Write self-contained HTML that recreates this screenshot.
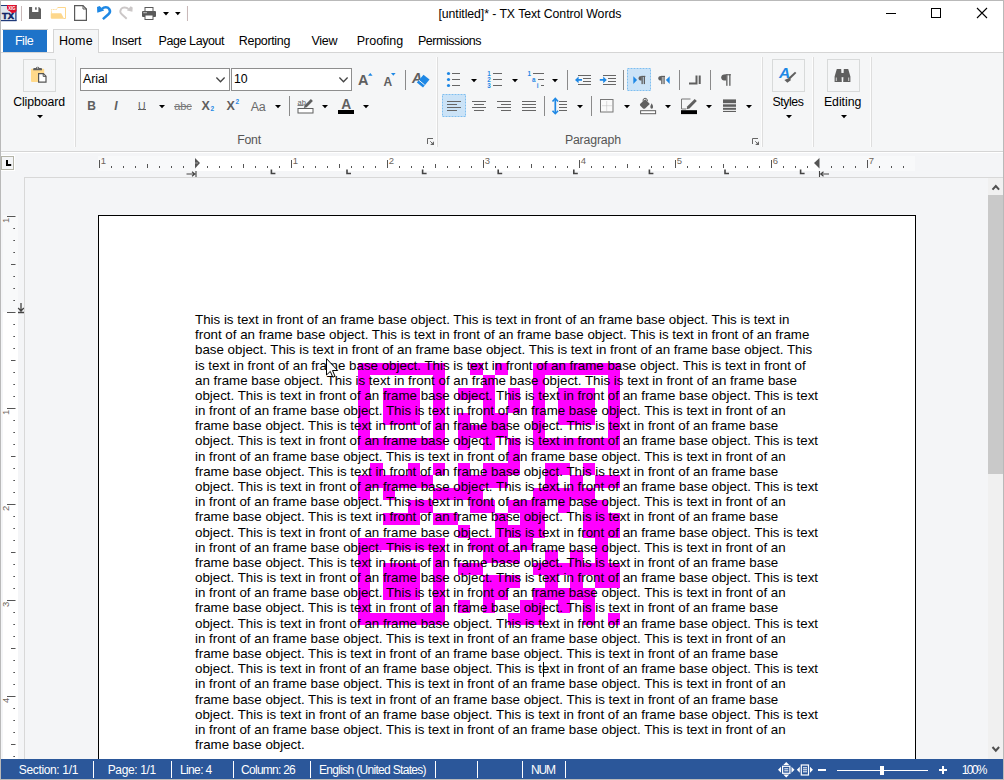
<!DOCTYPE html>
<html><head><meta charset="utf-8"><title>TX Text Control Words</title>
<style>

*{box-sizing:border-box;margin:0;padding:0}
html,body{width:1004px;height:780px;overflow:hidden;background:#fff}
body{font-family:"Liberation Sans",sans-serif;font-size:12px;color:#000}
#win{position:absolute;left:0;top:0;width:1004px;height:780px;background:#fff;border:1px solid #b9b9b9;overflow:hidden}
#win>*{position:absolute}
.abs,.abs>*{position:absolute}
svg{position:absolute;overflow:visible}
.t{position:absolute;white-space:nowrap;line-height:14px}
.c{transform:translateX(-50%)}
.vsep{position:absolute;width:1px;background:#dedede;box-shadow:-1px 0 0 #fdfdfd}
.sep2{position:absolute;width:1px;background:#8a8a8a}
.dd{position:absolute;width:0;height:0;border-left:2.7px solid transparent;border-right:2.7px solid transparent;border-top:3.3px solid #000}
.qr{position:absolute}
.ln{position:absolute;left:195px;white-space:nowrap;font-size:13.333px;line-height:15px;color:#000}

</style></head><body>
<div id="win">

<div class="abs" style="left:-1px;top:-1px;width:1004px;height:30px">
  <!-- app icon -->
  <svg style="left:1px;top:5px" width="16" height="17" viewBox="0 0 16 17">
    <rect x="0" y="0" width="15.5" height="16" fill="#dfe7ee"/>
    <rect x="0" y="0" width="15.5" height="1" fill="#1f3a7a"/>
    <rect x="0" y="15" width="15.5" height="1.2" fill="#1f3a7a"/>
    <rect x="14.3" y="0" width="1.2" height="16" fill="#1f3a7a"/>
    <text x="1" y="14" font-family="Liberation Sans" font-weight="bold" font-size="9.200" fill="#0f2466" stroke="#0f2466" stroke-width="0.500" textLength="12" lengthAdjust="spacingAndGlyphs">TX</text>
    <path d="M6 0h9.500v6q-1 2.200-4 2q-1.800-0.200-2.400-1.600q-1.800-0.200-2.500-1.600q-1-1.500-0.600-4.800z" fill="#e0102c"/>
    <text x="7.300" y="5.200" font-family="Liberation Sans" font-weight="bold" font-size="5" fill="#fff" textLength="7.200" lengthAdjust="spacingAndGlyphs">XIG</text>
  </svg>
  <div class="vsep" style="left:21px;top:6px;height:15px;background:#c9b9b9"></div>
  <!-- save -->
  <svg style="left:29px;top:7px" width="12" height="12" viewBox="0 0 12 12">
    <path d="M0 0h10l2 2v10h-12z" fill="#5f5f5f"/>
    <rect x="3.100" y="0" width="6.300" height="5" fill="#fff"/>
    <rect x="6.100" y="0.300" width="1.600" height="2.400" fill="#5f5f5f"/>
  </svg>
  <!-- open folder -->
  <svg style="left:50px;top:6px" width="17" height="14" viewBox="0 0 17 14">
    <path d="M7.500 1.500h8v11h-2" fill="none" stroke="#fdd78c" stroke-width="1"/>
    <path d="M1.500 7.300v-3.800h5l1-1.500" fill="none" stroke="#fdd78c" stroke-width="1" stroke-dasharray="1 0.700"/>
    <path d="M0.800 7.300h10.400l2.900 5.400h-12.300q-1 0-1-1z" fill="#fdd78c"/>
  </svg>
  <!-- new doc -->
  <svg style="left:74px;top:5px" width="13" height="16" viewBox="0 0 13 16">
    <path d="M0.600 0.600h8.400l3.400 3.400v11.400h-11.800z" fill="#fff" stroke="#5a5a5a" stroke-width="1.200"/>
    <path d="M9 0.600v3.400h3.400" fill="none" stroke="#5a5a5a" stroke-width="1"/>
  </svg>
  <!-- undo -->
  <svg style="left:96px;top:5px" width="16" height="16" viewBox="0 0 16 16">
    <path d="M6 3.800C8 1.900 11.600 1.700 13.200 3.900C14.800 6.200 13.800 8 12.400 9.300L6.900 14.100" fill="none" stroke="#1e88e5" stroke-width="2.500"/>
    <path d="M1 2L3.600 0.900L8.200 5.600L1.300 7.700Z" fill="#1e88e5"/>
  </svg>
  <!-- redo -->
  <svg style="left:119px;top:5px" width="16" height="16" viewBox="0 0 16 16">
    <g transform="translate(15,0) scale(-1,1)">
    <path d="M5.500 4C7.500 2.100 11.400 1.900 12.900 4C14.400 6.200 13.600 8 12.200 9.300L7.300 13.800" fill="none" stroke="#cbc7c7" stroke-width="1.900"/>
    <path d="M1.300 2.600L3.400 1.200L7 5.600L1.600 6.800Z" fill="#cbc7c7"/>
    </g>
  </svg>
  <!-- print -->
  <svg style="left:142px;top:7px" width="14" height="13" viewBox="0 0 14 13">
    <rect x="3" y="0.5" width="8" height="4" fill="#fff" stroke="#5a5a5a" stroke-width="1"/>
    <rect x="0" y="4" width="14" height="6" rx="1" fill="#5a5a5a"/>
    <rect x="3" y="8" width="8" height="4.5" fill="#fff" stroke="#5a5a5a" stroke-width="1"/>
    <rect x="1.5" y="5.2" width="1.2" height="1" fill="#fff"/><rect x="3.4" y="5.2" width="1.2" height="1" fill="#fff"/>
  </svg>
  <svg style="left:162.500px;top:11.800px" width="6" height="4"><path d="M0 0h6l-3 3.500z" fill="#000"/></svg>
  <svg style="left:175px;top:12.200px" width="6" height="4"><path d="M0 0h5.600l-2.800 3.300z" fill="#000"/></svg>
  <div class="vsep" style="left:187px;top:6px;height:15px;background:#c9b9b9"></div>
  <div class="t" style="left:438.40px;top:7px;font-size:12.3px;letter-spacing:-0.067px;color:#000;">[untitled]* - TX Text Control Words</div>
  <!-- window controls -->
  <svg style="left:886px;top:13px" width="10" height="1"><rect width="10" height="1" fill="#000"/></svg>
  <svg style="left:931px;top:8px" width="10" height="10"><rect x="0.5" y="0.5" width="9" height="9" fill="none" stroke="#000" stroke-width="1"/></svg>
  <svg style="left:977px;top:8px" width="10" height="10"><path d="M0 0L10 10M10 0L0 10" stroke="#000" stroke-width="1.1" fill="none"/></svg>
</div>


<div class="abs" style="left:-1px;top:-1px;width:1004px;height:60px">
  <div style="left:2px;top:29px;width:46px;height:1px;background:#cfcfcf"></div>
  <div style="left:3px;top:30px;width:44px;height:22px;background:#1e73c9"></div>
  <div class="t" style="left:14.90px;top:34px;font-size:12.5px;letter-spacing:-0.414px;color:#fff;">File</div>
  <div style="left:53px;top:29px;width:46px;height:24px;background:#f5f6f7;border:1px solid #d5d5d5;border-bottom:none"></div>
  <div class="t" style="left:58.90px;top:34px;font-size:12.5px;letter-spacing:0.119px;color:#000;">Home</div>
  <div class="t" style="left:111.80px;top:34px;font-size:12.5px;letter-spacing:-0.332px;color:#000;">Insert</div>
  <div class="t" style="left:158.60px;top:34px;font-size:12.5px;letter-spacing:-0.430px;color:#000;">Page Layout</div>
  <div class="t" style="left:238.80px;top:34px;font-size:12.5px;letter-spacing:-0.325px;color:#000;">Reporting</div>
  <div class="t" style="left:311.40px;top:34px;font-size:12.5px;letter-spacing:-0.256px;color:#000;">View</div>
  <div class="t" style="left:356.80px;top:34px;font-size:12.5px;letter-spacing:-0.023px;color:#000;">Proofing</div>
  <div class="t" style="left:417.90px;top:34px;font-size:12.5px;letter-spacing:-0.447px;color:#000;">Permissions</div>
</div>


<div class="abs" style="left:-1px;top:-1px;width:1004px;height:160px">
  <div style="left:1px;top:52px;width:1002px;height:100px;background:#f5f6f7;border-top:1px solid #d5d5d5;border-bottom:1px solid #d5d5d5"></div>
  <div style="left:54px;top:52px;width:44px;height:1px;background:#f5f6f7"></div>

  <!-- Clipboard -->
  <div style="left:23px;top:59px;width:33px;height:33px;border:1px solid #d8dada;background:#f5f6f7"></div>
  <svg style="left:31px;top:66px" width="17" height="18" viewBox="0 0 17 18">
    <rect x="0" y="2.800" width="13.200" height="13.200" rx="1" fill="#ffd98a"/>
    <path d="M2.200 4.300v-1.300q0-1 1-1h1.700q0.300-1.300 1.700-1.300t1.700 1.300h1.700q1 0 1 1v1.300z" fill="#5f5f5f"/>
    <circle cx="6.600" cy="1.900" r="0.600" fill="#eee"/>
    <path d="M7.600 7.600h4.800l2.600 2.600v6h-7.400z" fill="#fff" stroke="#555" stroke-width="1.200"/>
    <path d="M12.200 7.600v2.800h2.800" fill="none" stroke="#555" stroke-width="1"/>
  </svg>
  <div class="t" style="left:13.15px;top:95px;font-size:12.3px;letter-spacing:-0.087px;color:#000;">Clipboard</div>
  <svg style="left:36.6px;top:115px" width="6" height="4"><path d="M0 0h6l-3 3.300z" fill="#000"/></svg>
  <div class="vsep" style="left:75px;top:57px;height:90px"></div>

  <!-- Font combos -->
  <div style="left:80px;top:68px;width:150px;height:23px;background:#fff;border:1px solid #8e8e8e"></div>
  <div class="t" style="left:83px;top:72px;font-size:12.300px">Arial</div>
  <svg style="left:216px;top:77px" width="9" height="6"><path d="M0.400 0.500l4.100 4.200l4.100-4.200" fill="none" stroke="#444" stroke-width="1.300"/></svg>
  <div style="left:231px;top:68px;width:121px;height:23px;background:#fff;border:1px solid #8e8e8e"></div>
  <div class="t" style="left:234px;top:72px;font-size:12.300px">10</div>
  <svg style="left:338.500px;top:77px" width="9" height="6"><path d="M0.400 0.500l4.100 4.200l4.100-4.200" fill="none" stroke="#444" stroke-width="1.300"/></svg>

  <!-- grow / shrink -->
  <div class="t" style="left:358px;top:73px;font-size:14.500px;font-weight:bold;color:#5f5f5f">A</div>
  <svg style="left:367.500px;top:72.500px" width="5" height="3"><path d="M0 2.800l2.300-2.800l2.300 2.800z" fill="#1e88e5"/></svg>
  <div class="t" style="left:383.500px;top:75px;font-size:12px;font-weight:bold;color:#5f5f5f">A</div>
  <svg style="left:390.800px;top:72.500px" width="5" height="3"><path d="M0 0h4.600l-2.300 2.800z" fill="#1e88e5"/></svg>
  <div class="sep2" style="left:405px;top:70px;height:20px"></div>
  <!-- clear formatting -->
  <div class="t" style="left:412px;top:70.500px;font-size:14px;font-style:italic;font-weight:bold;color:#5f5f5f">A</div>
  <svg style="left:414px;top:74px" width="16" height="14" viewBox="0 0 16 14"><path d="M9.500 0.800l6 4.800l-6.500 8l-6.200-5z" fill="#1e88e5"/><path d="M4.800 6.200l5.800 4.700" stroke="#f5f6f7" stroke-width="1"/></svg>

  <!-- row 2 font -->
  <div class="t c" style="left:91.500px;top:99px;font-size:12px;font-weight:bold;color:#5f5f5f">B</div>
  <div class="t c" style="left:116px;top:99px;font-size:12px;font-weight:bold;font-style:italic;color:#5f5f5f">I</div>
  <div class="t c" style="left:141.700px;top:98.500px;font-size:10.500px;color:#5f5f5f">U</div><div style="left:138px;top:109.300px;width:7.500px;height:1px;background:#5f5f5f"></div>
  <svg style="left:158.5px;top:105px" width="6" height="4"><path d="M0 0h6l-3 3.300z" fill="#000"/></svg>
  <div class="t c" style="left:183px;top:99px;font-size:11px;color:#777;text-decoration:line-through">abc</div>
  <div class="t" style="left:201.500px;top:99px;font-size:12.500px;font-weight:bold;color:#5f5f5f">X</div>
  <div class="t" style="left:210.500px;top:105px;font-size:6.500px;font-weight:bold;color:#1e88e5;line-height:8px">2</div>
  <div class="t" style="left:226.500px;top:99px;font-size:12.500px;font-weight:bold;color:#5f5f5f">X</div>
  <div class="t" style="left:235.500px;top:98px;font-size:6.500px;font-weight:bold;color:#1e88e5;line-height:8px">2</div>
  <div class="t c" style="left:258px;top:100px;font-size:12.500px;color:#6a6a6a;letter-spacing:-0.500px">Aa</div>
  <svg style="left:274.5px;top:105px" width="6" height="4"><path d="M0 0h6l-3 3.300z" fill="#000"/></svg>
  <div class="sep2" style="left:289px;top:96px;height:20px"></div>
  <!-- highlight -->
  <svg style="left:297px;top:97px" width="18" height="18" viewBox="0 0 18 18">
    <text x="0.500" y="7.500" font-family="Liberation Sans" font-size="7.500" fill="#5f5f5f">ab</text>
    <path d="M0.500 8.500h6" stroke="#5f5f5f" stroke-width="0.800"/>
    <path d="M6.800 11l0.900-2.800l6.200-6.200l2 2l-6.200 6.200z" fill="#5f5f5f"/>
    <rect x="1" y="11.500" width="15" height="4.500" fill="#fff" stroke="#5f5f5f" stroke-width="1"/>
  </svg>
  <svg style="left:321.5px;top:105px" width="6" height="4"><path d="M0 0h6l-3 3.300z" fill="#000"/></svg>
  <div class="t c" style="left:346.200px;top:98.300px;font-size:13.800px;font-weight:bold;color:#5f5f5f">A</div>
  <div style="left:338px;top:110px;width:16px;height:4px;background:#000"></div>
  <svg style="left:362.5px;top:105px" width="6" height="4"><path d="M0 0h6l-3 3.300z" fill="#000"/></svg>
  <div class="t" style="left:237.20px;top:133px;font-size:12.3px;letter-spacing:-0.237px;color:#555;">Font</div>
  <svg style="left:427px;top:138px" width="8" height="8"><path d="M0.500 6v-5.500h5.500" fill="none" stroke="#666" stroke-width="1"/><path d="M7 3.200v3.800h-3.800z" fill="#666"/><path d="M3.300 3.300l2 2" stroke="#666" stroke-width="1"/></svg>
  <div class="vsep" style="left:437px;top:57px;height:90px"></div>

  <svg style="left:0;top:0" width="1004" height="160">
  <rect x="627.500" y="68.500" width="23" height="22" fill="#cbe3f7" stroke="#7fbef0" stroke-width="1" stroke-dasharray="2 1"/>
  <rect x="442.500" y="94.500" width="23" height="22" fill="#cbe3f7" stroke="#7fbef0" stroke-width="1" stroke-dasharray="2 1"/>
  <circle cx="448.500" cy="73.5" r="1.600" fill="#1e88e5"/><rect x="452" y="73.0" width="8" height="1" fill="#666"/><circle cx="448.500" cy="79.5" r="1.600" fill="#1e88e5"/><rect x="452" y="79.0" width="8" height="1" fill="#666"/><circle cx="448.500" cy="85.5" r="1.600" fill="#1e88e5"/><rect x="452" y="85.0" width="8" height="1" fill="#666"/><text x="487.300" y="75.8" font-family="Liberation Sans" font-weight="bold" font-size="6.300" fill="#1e88e5">1</text><rect x="493" y="73.0" width="9" height="1" fill="#666"/><text x="487.300" y="81.8" font-family="Liberation Sans" font-weight="bold" font-size="6.300" fill="#1e88e5">2</text><rect x="493" y="79.0" width="9" height="1" fill="#666"/><text x="487.300" y="87.8" font-family="Liberation Sans" font-weight="bold" font-size="6.300" fill="#1e88e5">3</text><rect x="493" y="85.0" width="9" height="1" fill="#666"/><text x="527.500" y="75.800" font-family="Liberation Sans" font-weight="bold" font-size="6.300" fill="#1e88e5">1</text><rect x="533" y="73" width="11" height="1" fill="#666"/><text x="532" y="81.800" font-family="Liberation Sans" font-weight="bold" font-size="6.300" fill="#1e88e5">a</text><rect x="538" y="79" width="6" height="1" fill="#666"/><text x="536.800" y="87.800" font-family="Liberation Sans" font-weight="bold" font-size="6.300" fill="#1e88e5">i</text><rect x="541" y="85" width="3" height="1" fill="#666"/><rect x="578" y="75" width="13" height="1" fill="#666"/><rect x="583" y="78" width="8" height="1" fill="#666"/><rect x="583" y="81" width="8" height="1" fill="#666"/><rect x="578" y="84" width="13" height="1" fill="#666"/><path d="M575 79.900l3.600-3.400v2.500h3.400v1.800h-3.400v2.500z" fill="#1e88e5"/><rect x="603" y="75" width="13" height="1" fill="#666"/><rect x="608" y="78" width="8" height="1" fill="#666"/><rect x="608" y="81" width="8" height="1" fill="#666"/><rect x="603" y="84" width="13" height="1" fill="#666"/><path d="M606.800 79.900l-3.600-3.400v2.500h-3.400v1.800h3.400v2.500z" fill="#1e88e5"/>
  <path d="M633.300 76.200l3.800 3.900l-3.800 3.900z" fill="#1e88e5"/>
  <path d="M641.70 75.9h-0.400a2.70 2.30 0 0 0 0 4.6h0.400z" fill="#5f5f5f"/><rect x="641.50" y="75.9" width="1.3" height="8.2" fill="#5f5f5f"/><rect x="643.70" y="75.9" width="1.3" height="8.2" fill="#5f5f5f"/><rect x="641.50" y="75.9" width="3.80" height="1.100" fill="#5f5f5f"/>
  <path d="M661.40 75.9h-0.400a2.70 2.30 0 0 0 0 4.6h0.400z" fill="#5f5f5f"/><rect x="661.20" y="75.9" width="1.3" height="8.2" fill="#5f5f5f"/><rect x="663.40" y="75.9" width="1.3" height="8.2" fill="#5f5f5f"/><rect x="661.20" y="75.9" width="3.80" height="1.100" fill="#5f5f5f"/>
  <path d="M669.700 76.200l-3.800 3.900l3.800 3.900z" fill="#1e88e5"/>
  <path d="M689 83.500h6.500M696.500 75.400v9.100M699.700 75.400v8.700" fill="none" stroke="#5f5f5f" stroke-width="2"/>
  <!-- big pilcrow -->
  <path d="M726.40 74.2h-0.400a4.80 3.20 0 0 0 0 6.4h0.400z" fill="#5f5f5f"/><rect x="726.20" y="74.2" width="1.3" height="11.6" fill="#5f5f5f"/><rect x="729.20" y="74.2" width="1.3" height="11.6" fill="#5f5f5f"/><rect x="726.20" y="74.2" width="4.60" height="1.100" fill="#5f5f5f"/>
  <rect x="447" y="101" width="14" height="1" fill="#666"/><rect x="447" y="104" width="10" height="1" fill="#666"/><rect x="447" y="107" width="14" height="1" fill="#666"/><rect x="447" y="110" width="10" height="1" fill="#666"/><rect x="472" y="101" width="14" height="1" fill="#666"/><rect x="474" y="104" width="10" height="1" fill="#666"/><rect x="472" y="107" width="14" height="1" fill="#666"/><rect x="474" y="110" width="10" height="1" fill="#666"/><rect x="497" y="101" width="14" height="1" fill="#666"/><rect x="501" y="104" width="10" height="1" fill="#666"/><rect x="497" y="107" width="14" height="1" fill="#666"/><rect x="501" y="110" width="10" height="1" fill="#666"/><rect x="522" y="101" width="14" height="1" fill="#666"/><rect x="522" y="104" width="14" height="1" fill="#666"/><rect x="522" y="107" width="14" height="1" fill="#666"/><rect x="522" y="110" width="14" height="1" fill="#666"/>
  <!-- line spacing -->
  <path d="M555.300 99v14.200" stroke="#1e88e5" stroke-width="1.700"/><path d="M552.500 101.500l2.800-3l2.800 3M552.500 110.700l2.800 3l2.800-3" fill="none" stroke="#1e88e5" stroke-width="1.600"/>
  <rect x="559" y="101" width="8" height="1" fill="#666"/><rect x="559" y="104" width="8" height="1" fill="#666"/><rect x="559" y="107" width="8" height="1" fill="#666"/><rect x="559" y="110" width="8" height="1" fill="#666"/>
  <!-- borders -->
  <rect x="600.500" y="99.500" width="12.500" height="12.500" fill="#fafafa" stroke="#777" stroke-width="1"/>
  <path d="M606.700 101.500v9M602.500 105.700h9" stroke="#bdbdbd" stroke-width="1" stroke-dasharray="1 1"/>
  <!-- bucket -->
  <path d="M640.300 103.800l5-4.500l4.500 4.800l-4.700 4.400q-1.300 0.700-2.300-0.300l-2.500-2.500q-0.800-1 0-1.900z" fill="#5f5f5f"/>
  <path d="M643 101.500q-0.300-3.200 2-3.300t2.600 3" fill="none" stroke="#5f5f5f" stroke-width="1"/>
  <path d="M651.700 103.300q2 3 1.200 4.800q-1.200 1.300-2.400 0q-0.800-1.800 1.200-4.800z" fill="#5f5f5f"/>
  <rect x="640.600" y="110.700" width="15" height="3" fill="#fff" stroke="#5f5f5f" stroke-width="1"/>
  <!-- line color -->
  <path d="M690.500 99h-9v10h4.500" fill="none" stroke="#777" stroke-width="1"/>
  <path d="M686.500 109.300l0.900-3l7.300-7.300l2.100 2.100l-7.300 7.300z" fill="#5f5f5f"/>
  <rect x="681" y="110.200" width="16" height="3.900" fill="#000"/>
  <!-- line style -->
  <rect x="723" y="99.4" width="13" height="3.8" fill="#5f5f5f"/><rect x="723" y="104.3" width="13" height="2.5" fill="#5f5f5f"/><rect x="723" y="107.8" width="13" height="2" fill="#5f5f5f"/><rect x="723" y="110.9" width="13" height="1.1" fill="#5f5f5f"/>
  <!-- styles brush -->
  <path d="M795 71.700l1.400 1.400l-6.600 6.300l-1.600-1.500z" fill="#5f5f5f"/><path d="M789 77.900l2.100 2.200l-3.700 2.600l-3-2.600z" fill="#5f5f5f"/>
  <!-- binoculars -->
  <path d="M836.800 69h4.400l0.600 13h-7.200v-5.500zM843.800 69h4.400l2.200 7.500v5.500h-7.200z" fill="#5f5f5f"/>
  <rect x="841" y="73" width="3" height="4.200" fill="#5f5f5f"/>
  <rect x="835.800" y="77.500" width="1" height="3.500" fill="#d0d0d0"/><rect x="848.200" y="77.500" width="1" height="3.500" fill="#d0d0d0"/>
  </svg>
  <svg style="left:470.5px;top:79px" width="6" height="4"><path d="M0 0h6l-3 3.300z" fill="#000"/></svg><svg style="left:511.6px;top:79px" width="6" height="4"><path d="M0 0h6l-3 3.300z" fill="#000"/></svg><svg style="left:552.4px;top:79px" width="6" height="4"><path d="M0 0h6l-3 3.300z" fill="#000"/></svg>
  <div class="sep2" style="left:567px;top:70px;height:20px"></div>
  <div class="sep2" style="left:623px;top:70px;height:20px"></div>
  <div class="sep2" style="left:679px;top:70px;height:20px"></div>
  <div class="sep2" style="left:710px;top:70px;height:20px"></div>
  <div class="sep2" style="left:544px;top:96px;height:20px"></div>
  <svg style="left:576.5px;top:105px" width="6" height="4"><path d="M0 0h6l-3 3.300z" fill="#000"/></svg>
  <div class="sep2" style="left:591px;top:96px;height:20px"></div>
  <svg style="left:623.6px;top:105px" width="6" height="4"><path d="M0 0h6l-3 3.300z" fill="#000"/></svg><svg style="left:664.5px;top:105px" width="6" height="4"><path d="M0 0h6l-3 3.300z" fill="#000"/></svg><svg style="left:705.7px;top:105px" width="6" height="4"><path d="M0 0h6l-3 3.300z" fill="#000"/></svg><svg style="left:746.3px;top:105px" width="6" height="4"><path d="M0 0h6l-3 3.300z" fill="#000"/></svg>
  <div class="t" style="left:564.90px;top:133px;font-size:12.3px;letter-spacing:-0.155px;color:#555;">Paragraph</div>
  <svg style="left:752px;top:138px" width="8" height="8"><path d="M0.500 6v-5.500h5.500" fill="none" stroke="#666" stroke-width="1"/><path d="M7 3.200v3.800h-3.800z" fill="#666"/><path d="M3.300 3.300l2 2" stroke="#666" stroke-width="1"/></svg>
  <div class="vsep" style="left:762px;top:57px;height:90px"></div>

  <!-- Styles -->
  <div style="left:772px;top:59px;width:33px;height:33px;border:1px solid #d8dada"></div>
  <div class="t" style="left:779px;top:65.500px;font-size:15.500px;font-weight:bold;font-style:italic;color:#1e88e5">A</div>
  <div class="t" style="left:772.60px;top:95px;font-size:12.3px;letter-spacing:-0.439px;color:#000;">Styles</div>
  <svg style="left:785.5px;top:115px" width="6" height="4"><path d="M0 0h6l-3 3.300z" fill="#000"/></svg>
  <div class="vsep" style="left:813px;top:57px;height:90px"></div>

  <!-- Editing -->
  <div style="left:827px;top:59px;width:33px;height:33px;border:1px solid #d8dada"></div>
  <div class="t" style="left:823.90px;top:95px;font-size:12.3px;letter-spacing:-0.018px;color:#000;">Editing</div>
  <svg style="left:840.5px;top:115px" width="6" height="4"><path d="M0 0h6l-3 3.300z" fill="#000"/></svg>
  <div class="vsep" style="left:871px;top:57px;height:90px"></div>
</div>


<div class="abs" style="left:-1px;top:-1px;width:1004px;height:182px">
  <div style="left:1px;top:153px;width:1002px;height:606px;background:#f4f5f7"></div>
  <div style="left:1px;top:156px;width:13px;height:14px;background:#f4f5f7;border:1px solid #b4b4a8;box-shadow:0 0 0 1px #fff"></div>
  <svg style="left:6px;top:160px" width="6" height="7"><path d="M1 0v5h4.200" fill="none" stroke="#000" stroke-width="2"/></svg>
  <div style="left:98px;top:156px;width:817px;height:15px;background:#f8f9fa"></div>
  <div style="left:196px;top:156px;width:622px;height:15px;background:#fff"></div>
  <svg style="left:0;top:0" width="1004" height="182"><rect x="99" y="160" width="1" height="8" fill="#555"/><text x="100.8" y="164" font-family="Liberation Sans" font-size="9.500" fill="#6e665c">1</text><rect x="111" y="166" width="1" height="2" fill="#555"/><rect x="123" y="166" width="1" height="2" fill="#555"/><rect x="135" y="166" width="1" height="2" fill="#555"/><rect x="147" y="164" width="1" height="4" fill="#555"/><rect x="159" y="166" width="1" height="2" fill="#555"/><rect x="171" y="166" width="1" height="2" fill="#555"/><rect x="183" y="166" width="1" height="2" fill="#555"/><rect x="207" y="166" width="1" height="2" fill="#555"/><rect x="219" y="166" width="1" height="2" fill="#555"/><rect x="231" y="166" width="1" height="2" fill="#555"/><rect x="243" y="164" width="1" height="4" fill="#555"/><rect x="255" y="166" width="1" height="2" fill="#555"/><rect x="267" y="166" width="1" height="2" fill="#555"/><rect x="279" y="166" width="1" height="2" fill="#555"/><rect x="291" y="160" width="1" height="8" fill="#555"/><text x="292.8" y="164" font-family="Liberation Sans" font-size="9.500" fill="#6e665c">1</text><rect x="303" y="166" width="1" height="2" fill="#555"/><rect x="315" y="166" width="1" height="2" fill="#555"/><rect x="327" y="166" width="1" height="2" fill="#555"/><rect x="339" y="164" width="1" height="4" fill="#555"/><rect x="351" y="166" width="1" height="2" fill="#555"/><rect x="363" y="166" width="1" height="2" fill="#555"/><rect x="375" y="166" width="1" height="2" fill="#555"/><rect x="387" y="160" width="1" height="8" fill="#555"/><text x="388.8" y="164" font-family="Liberation Sans" font-size="9.500" fill="#6e665c">2</text><rect x="399" y="166" width="1" height="2" fill="#555"/><rect x="411" y="166" width="1" height="2" fill="#555"/><rect x="423" y="166" width="1" height="2" fill="#555"/><rect x="435" y="164" width="1" height="4" fill="#555"/><rect x="447" y="166" width="1" height="2" fill="#555"/><rect x="459" y="166" width="1" height="2" fill="#555"/><rect x="471" y="166" width="1" height="2" fill="#555"/><rect x="483" y="160" width="1" height="8" fill="#555"/><text x="484.8" y="164" font-family="Liberation Sans" font-size="9.500" fill="#6e665c">3</text><rect x="495" y="166" width="1" height="2" fill="#555"/><rect x="507" y="166" width="1" height="2" fill="#555"/><rect x="519" y="166" width="1" height="2" fill="#555"/><rect x="531" y="164" width="1" height="4" fill="#555"/><rect x="543" y="166" width="1" height="2" fill="#555"/><rect x="555" y="166" width="1" height="2" fill="#555"/><rect x="567" y="166" width="1" height="2" fill="#555"/><rect x="579" y="160" width="1" height="8" fill="#555"/><text x="580.8" y="164" font-family="Liberation Sans" font-size="9.500" fill="#6e665c">4</text><rect x="591" y="166" width="1" height="2" fill="#555"/><rect x="603" y="166" width="1" height="2" fill="#555"/><rect x="615" y="166" width="1" height="2" fill="#555"/><rect x="627" y="164" width="1" height="4" fill="#555"/><rect x="639" y="166" width="1" height="2" fill="#555"/><rect x="651" y="166" width="1" height="2" fill="#555"/><rect x="663" y="166" width="1" height="2" fill="#555"/><rect x="675" y="160" width="1" height="8" fill="#555"/><text x="676.8" y="164" font-family="Liberation Sans" font-size="9.500" fill="#6e665c">5</text><rect x="687" y="166" width="1" height="2" fill="#555"/><rect x="699" y="166" width="1" height="2" fill="#555"/><rect x="711" y="166" width="1" height="2" fill="#555"/><rect x="723" y="164" width="1" height="4" fill="#555"/><rect x="735" y="166" width="1" height="2" fill="#555"/><rect x="747" y="166" width="1" height="2" fill="#555"/><rect x="759" y="166" width="1" height="2" fill="#555"/><rect x="771" y="160" width="1" height="8" fill="#555"/><text x="772.8" y="164" font-family="Liberation Sans" font-size="9.500" fill="#6e665c">6</text><rect x="783" y="166" width="1" height="2" fill="#555"/><rect x="795" y="166" width="1" height="2" fill="#555"/><rect x="807" y="166" width="1" height="2" fill="#555"/><rect x="831" y="166" width="1" height="2" fill="#555"/><rect x="843" y="166" width="1" height="2" fill="#555"/><rect x="855" y="166" width="1" height="2" fill="#555"/><rect x="867" y="160" width="1" height="8" fill="#555"/><text x="868.8" y="164" font-family="Liberation Sans" font-size="9.500" fill="#6e665c">7</text><rect x="879" y="166" width="1" height="2" fill="#555"/><rect x="891" y="166" width="1" height="2" fill="#555"/><rect x="903" y="166" width="1" height="2" fill="#555"/><path d="M271.4 169.5v4h4" fill="none" stroke="#444" stroke-width="1.6"/><path d="M347.0 169.5v4h4" fill="none" stroke="#444" stroke-width="1.6"/><path d="M422.6 169.5v4h4" fill="none" stroke="#444" stroke-width="1.6"/><path d="M498.2 169.5v4h4" fill="none" stroke="#444" stroke-width="1.6"/><path d="M573.8 169.5v4h4" fill="none" stroke="#444" stroke-width="1.6"/><path d="M649.4 169.5v4h4" fill="none" stroke="#444" stroke-width="1.6"/><path d="M725.0 169.5v4h4" fill="none" stroke="#444" stroke-width="1.6"/><path d="M800.6 169.5v4h4" fill="none" stroke="#444" stroke-width="1.6"/><path d="M195 158l5 5l-5 5.5z" fill="#555"/><path d="M195 163h3" stroke="#bbb" stroke-width="0.8"/><path d="M819.5 158l-5.500 5l5.500 5.500z" fill="#555"/><path d="M186.500 174h8.500M192 171.800l2.800 2.200l-2.800 2.200M196 171v6" fill="none" stroke="#444" stroke-width="1.100"/><path d="M829 174h-8.500M823.500 171.800l-2.800 2.200l2.800 2.200M819.500 171v6" fill="none" stroke="#444" stroke-width="1.100"/></svg>
</div>


<div class="abs" style="left:-1px;top:-1px;width:1004px;height:760px">
  <div style="left:3px;top:215px;width:15px;height:97px;background:#f8f9fa"></div>
  <div style="left:3px;top:312px;width:15px;height:447px;background:#fff"></div>
  <svg style="left:0;top:0" width="30" height="760"><rect x="7" y="216" width="8.500" height="1" fill="#555"/><text transform="translate(9.300,217.8) rotate(-90)" text-anchor="end" font-family="Liberation Sans" font-size="9.500" fill="#6e665c">1</text><rect x="13.300" y="228" width="1.700" height="1" fill="#555"/><rect x="13.300" y="240" width="1.700" height="1" fill="#555"/><rect x="13.300" y="252" width="1.700" height="1" fill="#555"/><rect x="11" y="264" width="4.500" height="1" fill="#555"/><rect x="13.300" y="276" width="1.700" height="1" fill="#555"/><rect x="13.300" y="288" width="1.700" height="1" fill="#555"/><rect x="13.300" y="300" width="1.700" height="1" fill="#555"/><rect x="7" y="312" width="8.500" height="1" fill="#555"/><rect x="13.300" y="324" width="1.700" height="1" fill="#555"/><rect x="13.300" y="336" width="1.700" height="1" fill="#555"/><rect x="13.300" y="348" width="1.700" height="1" fill="#555"/><rect x="11" y="360" width="4.500" height="1" fill="#555"/><rect x="13.300" y="372" width="1.700" height="1" fill="#555"/><rect x="13.300" y="384" width="1.700" height="1" fill="#555"/><rect x="13.300" y="396" width="1.700" height="1" fill="#555"/><rect x="7" y="408" width="8.500" height="1" fill="#555"/><text transform="translate(9.300,409.8) rotate(-90)" text-anchor="end" font-family="Liberation Sans" font-size="9.500" fill="#6e665c">1</text><rect x="13.300" y="420" width="1.700" height="1" fill="#555"/><rect x="13.300" y="432" width="1.700" height="1" fill="#555"/><rect x="13.300" y="444" width="1.700" height="1" fill="#555"/><rect x="11" y="456" width="4.500" height="1" fill="#555"/><rect x="13.300" y="468" width="1.700" height="1" fill="#555"/><rect x="13.300" y="480" width="1.700" height="1" fill="#555"/><rect x="13.300" y="492" width="1.700" height="1" fill="#555"/><rect x="7" y="504" width="8.500" height="1" fill="#555"/><text transform="translate(9.300,505.8) rotate(-90)" text-anchor="end" font-family="Liberation Sans" font-size="9.500" fill="#6e665c">2</text><rect x="13.300" y="516" width="1.700" height="1" fill="#555"/><rect x="13.300" y="528" width="1.700" height="1" fill="#555"/><rect x="13.300" y="540" width="1.700" height="1" fill="#555"/><rect x="11" y="552" width="4.500" height="1" fill="#555"/><rect x="13.300" y="564" width="1.700" height="1" fill="#555"/><rect x="13.300" y="576" width="1.700" height="1" fill="#555"/><rect x="13.300" y="588" width="1.700" height="1" fill="#555"/><rect x="7" y="600" width="8.500" height="1" fill="#555"/><text transform="translate(9.300,601.8) rotate(-90)" text-anchor="end" font-family="Liberation Sans" font-size="9.500" fill="#6e665c">3</text><rect x="13.300" y="612" width="1.700" height="1" fill="#555"/><rect x="13.300" y="624" width="1.700" height="1" fill="#555"/><rect x="13.300" y="636" width="1.700" height="1" fill="#555"/><rect x="11" y="648" width="4.500" height="1" fill="#555"/><rect x="13.300" y="660" width="1.700" height="1" fill="#555"/><rect x="13.300" y="672" width="1.700" height="1" fill="#555"/><rect x="13.300" y="684" width="1.700" height="1" fill="#555"/><rect x="7" y="696" width="8.500" height="1" fill="#555"/><text transform="translate(9.300,697.8) rotate(-90)" text-anchor="end" font-family="Liberation Sans" font-size="9.500" fill="#6e665c">4</text><rect x="13.300" y="708" width="1.700" height="1" fill="#555"/><rect x="13.300" y="720" width="1.700" height="1" fill="#555"/><rect x="13.300" y="732" width="1.700" height="1" fill="#555"/><rect x="11" y="744" width="4.500" height="1" fill="#555"/><rect x="13.300" y="756" width="1.700" height="1" fill="#555"/><path d="M21 303v8M18.200 308l2.800 3l2.800-3M18 312.500h6" fill="none" stroke="#444" stroke-width="1.300"/></svg>
  <div style="left:24px;top:177px;width:979px;height:583px;border-left:1px solid #d8d8d8;border-top:1px solid #d8d8d8"></div>
  <div style="left:98px;top:215px;width:818px;height:560px;background:#fff;border:1px solid #000"></div>
  <svg class="qr" style="left:358px;top:363px" width="262" height="262" shape-rendering="crispEdges" fill="#ff00ff"><rect x="0" y="0" width="87" height="12"/><rect x="112" y="0" width="13" height="12"/><rect x="137" y="0" width="13" height="12"/><rect x="175" y="0" width="87" height="12"/><rect x="0" y="12" width="12" height="13"/><rect x="75" y="12" width="12" height="13"/><rect x="125" y="12" width="12" height="13"/><rect x="175" y="12" width="12" height="13"/><rect x="250" y="12" width="12" height="13"/><rect x="0" y="25" width="12" height="12"/><rect x="25" y="25" width="37" height="12"/><rect x="75" y="25" width="12" height="12"/><rect x="100" y="25" width="37" height="12"/><rect x="150" y="25" width="12" height="12"/><rect x="175" y="25" width="12" height="12"/><rect x="200" y="25" width="37" height="12"/><rect x="250" y="25" width="12" height="12"/><rect x="0" y="37" width="12" height="13"/><rect x="25" y="37" width="37" height="13"/><rect x="75" y="37" width="12" height="13"/><rect x="125" y="37" width="12" height="13"/><rect x="150" y="37" width="12" height="13"/><rect x="175" y="37" width="12" height="13"/><rect x="200" y="37" width="37" height="13"/><rect x="250" y="37" width="12" height="13"/><rect x="0" y="50" width="12" height="12"/><rect x="25" y="50" width="37" height="12"/><rect x="75" y="50" width="12" height="12"/><rect x="100" y="50" width="12" height="12"/><rect x="125" y="50" width="25" height="12"/><rect x="175" y="50" width="12" height="12"/><rect x="200" y="50" width="37" height="12"/><rect x="250" y="50" width="12" height="12"/><rect x="0" y="62" width="12" height="13"/><rect x="75" y="62" width="12" height="13"/><rect x="100" y="62" width="50" height="13"/><rect x="175" y="62" width="12" height="13"/><rect x="250" y="62" width="12" height="13"/><rect x="0" y="75" width="87" height="12"/><rect x="100" y="75" width="12" height="12"/><rect x="125" y="75" width="12" height="12"/><rect x="150" y="75" width="12" height="12"/><rect x="175" y="75" width="87" height="12"/><rect x="150" y="87" width="12" height="13"/><rect x="12" y="100" width="13" height="12"/><rect x="50" y="100" width="12" height="12"/><rect x="75" y="100" width="12" height="12"/><rect x="100" y="100" width="12" height="12"/><rect x="125" y="100" width="37" height="12"/><rect x="187" y="100" width="25" height="12"/><rect x="225" y="100" width="12" height="12"/><rect x="0" y="112" width="75" height="13"/><rect x="100" y="112" width="50" height="13"/><rect x="187" y="112" width="13" height="13"/><rect x="212" y="112" width="13" height="13"/><rect x="237" y="112" width="25" height="13"/><rect x="0" y="125" width="12" height="12"/><rect x="25" y="125" width="12" height="12"/><rect x="75" y="125" width="50" height="12"/><rect x="175" y="125" width="62" height="12"/><rect x="50" y="137" width="25" height="13"/><rect x="112" y="137" width="25" height="13"/><rect x="150" y="137" width="37" height="13"/><rect x="200" y="137" width="12" height="13"/><rect x="225" y="137" width="25" height="13"/><rect x="25" y="150" width="37" height="12"/><rect x="75" y="150" width="25" height="12"/><rect x="137" y="150" width="13" height="12"/><rect x="162" y="150" width="25" height="12"/><rect x="225" y="150" width="37" height="12"/><rect x="100" y="162" width="12" height="13"/><rect x="137" y="162" width="50" height="13"/><rect x="225" y="162" width="37" height="13"/><rect x="0" y="175" width="87" height="12"/><rect x="112" y="175" width="38" height="12"/><rect x="162" y="175" width="13" height="12"/><rect x="237" y="175" width="13" height="12"/><rect x="0" y="187" width="12" height="13"/><rect x="75" y="187" width="12" height="13"/><rect x="125" y="187" width="37" height="13"/><rect x="187" y="187" width="13" height="13"/><rect x="212" y="187" width="13" height="13"/><rect x="237" y="187" width="13" height="13"/><rect x="0" y="200" width="12" height="12"/><rect x="25" y="200" width="37" height="12"/><rect x="75" y="200" width="12" height="12"/><rect x="100" y="200" width="25" height="12"/><rect x="175" y="200" width="87" height="12"/><rect x="0" y="212" width="12" height="13"/><rect x="25" y="212" width="37" height="13"/><rect x="75" y="212" width="12" height="13"/><rect x="125" y="212" width="37" height="13"/><rect x="187" y="212" width="13" height="13"/><rect x="212" y="212" width="13" height="13"/><rect x="237" y="212" width="25" height="13"/><rect x="0" y="225" width="12" height="12"/><rect x="25" y="225" width="37" height="12"/><rect x="75" y="225" width="12" height="12"/><rect x="125" y="225" width="25" height="12"/><rect x="175" y="225" width="62" height="12"/><rect x="0" y="237" width="12" height="13"/><rect x="75" y="237" width="12" height="13"/><rect x="100" y="237" width="12" height="13"/><rect x="125" y="237" width="12" height="13"/><rect x="162" y="237" width="25" height="13"/><rect x="200" y="237" width="12" height="13"/><rect x="225" y="237" width="12" height="13"/><rect x="0" y="250" width="87" height="12"/><rect x="150" y="250" width="37" height="12"/><rect x="225" y="250" width="12" height="12"/><rect x="250" y="250" width="12" height="12"/></svg>
  <div class="ln" style="top:312px">This is text in front of an frame base object. This is text in front of an frame base object. This is text in</div>
<div class="ln" style="top:327px">front of an frame base object. This is text in front of an frame base object. This is text in front of an frame</div>
<div class="ln" style="top:342px">base object. This is text in front of an frame base object. This is text in front of an frame base object. This</div>
<div class="ln" style="top:358px">is text in front of an frame base object. This is text in front of an frame base object. This is text in front of</div>
<div class="ln" style="top:373px">an frame base object. This is text in front of an frame base object. This is text in front of an frame base</div>
<div class="ln" style="top:388px">object. This is text in front of an frame base object. This is text in front of an frame base object. This is text</div>
<div class="ln" style="top:403px">in front of an frame base object. This is text in front of an frame base object. This is text in front of an</div>
<div class="ln" style="top:418px">frame base object. This is text in front of an frame base object. This is text in front of an frame base</div>
<div class="ln" style="top:433px">object. This is text in front of an frame base object. This is text in front of an frame base object. This is text</div>
<div class="ln" style="top:449px">in front of an frame base object. This is text in front of an frame base object. This is text in front of an</div>
<div class="ln" style="top:464px">frame base object. This is text in front of an frame base object. This is text in front of an frame base</div>
<div class="ln" style="top:479px">object. This is text in front of an frame base object. This is text in front of an frame base object. This is text</div>
<div class="ln" style="top:494px">in front of an frame base object. This is text in front of an frame base object. This is text in front of an</div>
<div class="ln" style="top:509px">frame base object. This is text in front of an frame base object. This is text in front of an frame base</div>
<div class="ln" style="top:525px">object. This is text in front of an frame base object. This is text in front of an frame base object. This is text</div>
<div class="ln" style="top:540px">in front of an frame base object. This is text in front of an frame base object. This is text in front of an</div>
<div class="ln" style="top:555px">frame base object. This is text in front of an frame base object. This is text in front of an frame base</div>
<div class="ln" style="top:570px">object. This is text in front of an frame base object. This is text in front of an frame base object. This is text</div>
<div class="ln" style="top:585px">in front of an frame base object. This is text in front of an frame base object. This is text in front of an</div>
<div class="ln" style="top:600px">frame base object. This is text in front of an frame base object. This is text in front of an frame base</div>
<div class="ln" style="top:616px">object. This is text in front of an frame base object. This is text in front of an frame base object. This is text</div>
<div class="ln" style="top:631px">in front of an frame base object. This is text in front of an frame base object. This is text in front of an</div>
<div class="ln" style="top:646px">frame base object. This is text in front of an frame base object. This is text in front of an frame base</div>
<div class="ln" style="top:661px">object. This is text in front of an frame base object. This is text in front of an frame base object. This is text</div>
<div class="ln" style="top:676px">in front of an frame base object. This is text in front of an frame base object. This is text in front of an</div>
<div class="ln" style="top:692px">frame base object. This is text in front of an frame base object. This is text in front of an frame base</div>
<div class="ln" style="top:707px">object. This is text in front of an frame base object. This is text in front of an frame base object. This is text</div>
<div class="ln" style="top:722px">in front of an frame base object. This is text in front of an frame base object. This is text in front of an</div>
<div class="ln" style="top:737px">frame base object.</div>
  <div style="left:543px;top:662px;width:1px;height:15px;background:#000"></div>
  <svg style="left:326px;top:358px" width="13" height="20" viewBox="0 0 13 20"><path d="M0.500 0.700v16.300l3.800-3.600l2.500 5.800l2.200-1l-2.500-5.700h5.200z" fill="#fff" stroke="#000" stroke-width="1"/></svg>
  <!-- scrollbar -->
  <div style="left:988px;top:178px;width:15px;height:581px;background:#f0f0f0"></div>
  <div style="left:988px;top:195px;width:15px;height:279px;background:#c9c9c9"></div>
  <svg style="left:991px;top:183.500px" width="10" height="7"><path d="M1.500 5.700l3.300-3.700l3.300 3.700" fill="none" stroke="#505050" stroke-width="2"/></svg>
  <svg style="left:991px;top:746px" width="10" height="7"><path d="M1.500 1l3.300 3.700l3.300-3.700" fill="none" stroke="#505050" stroke-width="2"/></svg>
</div>


<div class="abs" style="left:-1px;top:-1px;width:1004px;height:780px">
  <div style="left:1px;top:759px;width:1002px;height:20px;background:#2b579a"></div>
  <div class="t" style="left:18.80px;top:763px;font-size:12px;letter-spacing:-0.352px;color:#fff;">Section: 1/1</div><div style="left:93px;top:761px;width:1px;height:17px;background:#fff"></div>
  <div class="t" style="left:107.70px;top:763px;font-size:12px;letter-spacing:-0.359px;color:#fff;">Page: 1/1</div><div style="left:171px;top:761px;width:1px;height:17px;background:#fff"></div>
  <div class="t" style="left:179.90px;top:763px;font-size:12px;letter-spacing:-0.605px;color:#fff;">Line: 4</div><div style="left:233px;top:761px;width:1px;height:17px;background:#fff"></div>
  <div class="t" style="left:241.10px;top:763px;font-size:12px;letter-spacing:-0.741px;color:#fff;">Column: 26</div><div style="left:310px;top:761px;width:1px;height:17px;background:#fff"></div>
  <div class="t" style="left:319.00px;top:763px;font-size:12px;letter-spacing:-0.688px;color:#fff;">English (United States)</div>
  <div style="left:435px;top:761px;width:1px;height:17px;background:#fff"></div><div style="left:477px;top:761px;width:1px;height:17px;background:#fff"></div><div style="left:522px;top:761px;width:1px;height:17px;background:#fff"></div>
  <div class="t" style="left:531.00px;top:763px;font-size:12px;letter-spacing:-1.214px;color:#fff;">NUM</div><div style="left:565px;top:761px;width:1px;height:17px;background:#fff"></div>
  <svg style="left:777.5px;top:761.5px" width="36" height="16" fill="#fff" stroke="none">
    <path d="M0 7.800l3-3v6zM16.500 7.800l-3-3v6zM8.250 0l3 3h-6zM8.250 15.600l3-3h-6z"/>
    <rect x="4.600" y="4.300" width="7.300" height="7" fill="none" stroke="#fff" stroke-width="1.200"/><rect x="6.300" y="6.300" width="4" height="1"/><rect x="6.300" y="8.300" width="4" height="1"/>
    <path d="M18.800 7.800l3-3v6zM35 7.800l-3-3v6z"/>
    <rect x="23.300" y="3" width="7.200" height="10" fill="none" stroke="#fff" stroke-width="1.200"/><rect x="25" y="5.300" width="4" height="1"/><rect x="25" y="7.300" width="4" height="1"/><rect x="25" y="9.300" width="4" height="1"/>
  </svg>
  <div style="left:818.300px;top:769px;width:8px;height:2px;background:#fff"></div>
  <div style="left:837px;top:770px;width:91px;height:1px;background:#fff"></div>
  <div style="left:880.300px;top:766px;width:4px;height:9px;background:#fff"></div>
  <div style="left:939px;top:769.300px;width:8px;height:2px;background:#fff"></div>
  <div style="left:942px;top:766.300px;width:2px;height:8px;background:#fff"></div>
  <div class="t" style="left:961.70px;top:763px;font-size:12px;letter-spacing:-1.664px;color:#fff;">100%</div>
</div>

</div>
</body></html>
